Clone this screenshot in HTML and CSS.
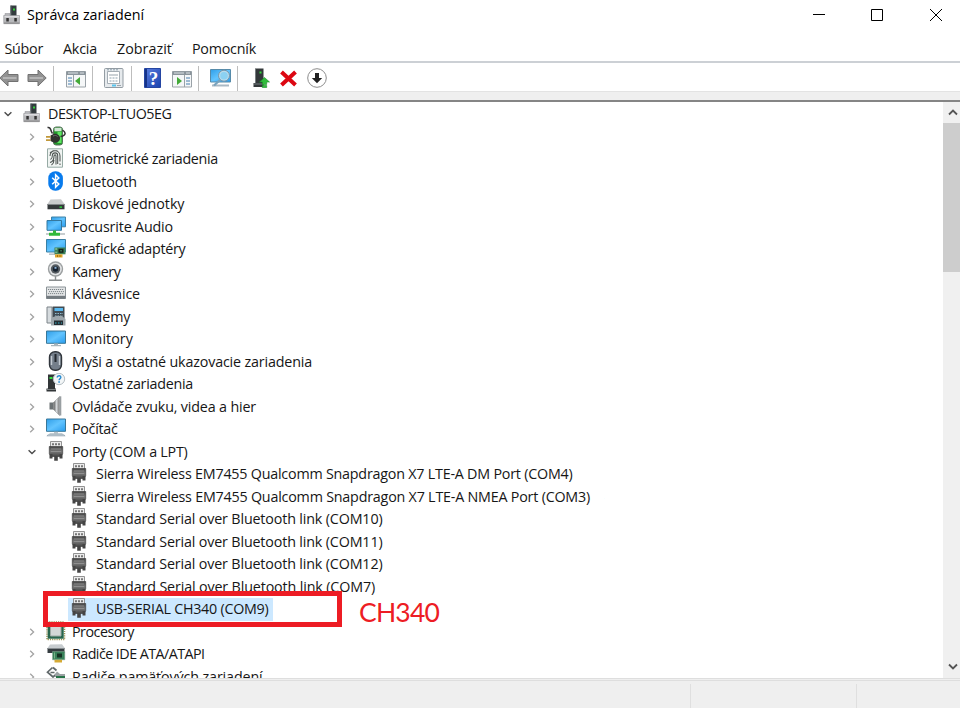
FILE: index.html
```html
<!DOCTYPE html>
<html lang="sk">
<head>
<meta charset="utf-8">
<title>Správca zariadení</title>
<link rel="stylesheet" href="styles.css">
</head>
<body>
<svg class="defs" width="0" height="0" aria-hidden="true">
<defs>
<linearGradient id="blue" x1="0" y1="0" x2="1" y2="1"><stop offset="0" stop-color="#2f9ee8"/><stop offset=".5" stop-color="#62c4ff"/><stop offset="1" stop-color="#299cee"/></linearGradient>
<linearGradient id="metal" x1="0" y1="0" x2="1" y2="0"><stop offset="0" stop-color="#555"/><stop offset=".5" stop-color="#d5d8db"/><stop offset="1" stop-color="#777"/></linearGradient>
<linearGradient id="help" x1="0" y1="0" x2="1" y2="1"><stop offset="0" stop-color="#5c7fe0"/><stop offset="1" stop-color="#1740ad"/></linearGradient>
<linearGradient id="plug" x1="0" y1="0" x2="0" y2="1"><stop offset="0" stop-color="#444"/><stop offset=".5" stop-color="#777"/><stop offset="1" stop-color="#444"/></linearGradient>
<symbol id="root" viewBox="0 0 20 20"><path fill="#333b3e" d="M8.500 .5h6v11h-6z"/><path fill="#555d60" d="M8.500 .5h1v11h-1z"/><path fill="#35d13c" d="M11 3.500h2v2h-2z"/><path fill="#b7b8bb" stroke="#98999d" stroke-width=".6" d="M3 8.500h5v2h9.500v8.200H1.700v-8.200H3z"/><path fill="#dcdcdf" d="M2.500 11h14.500v1.500H2.500z"/><path fill="#333" d="M4.300 13h2.500v3.500H4.300zM12.300 13h2.500v3.500h-2.500z"/><path fill="#888" d="M2 17.500h15.500v1.200H2z"/></symbol>
<symbol id="battery" viewBox="0 0 20 20"><rect x="7.500" y="1" width="9" height="18" rx="2.500" fill="#23982b" stroke="#56705b"/><path fill="#d3e5d5" d="M8.500 1.800h7v3.500h-7z"/><path fill="#5ee562" d="M11.500 6h4v11h-4z"/><path d="M16.500 4c4.500 3 2.500 6-2 6.500M1.500 1.500c4-1 2.500 3 5 6" fill="none" stroke="#333" stroke-width="1.500"/><path fill="#30322f" d="M4.500 9.500 8 7.800c4 0 6 2 6 4.500s-2 4.500-6 4.500L4.500 15z"/><path stroke="#7c807b" d="M7 10c2-.8 3.500-.3 4.500.5"/><path stroke="#c1983a" stroke-width="1.700" d="M0 10.800h4.500M0 14.200h4.500"/></symbol>
<symbol id="finger" viewBox="0 0 20 20"><path fill="#f0f4f2" stroke="#96aaa4" d="M1.500.8h15v18.400h-15z"/><g fill="none" stroke="#4d5451" stroke-width="1.050" transform="translate(-1 0)"><path d="M5 8c0-7 10-7 10 0v5.500M5.500 11.500c2-1 1.800-2.500 1.800-4 .2-3.500 5.400-3.500 5.400 0v8.500M5 14.500c4-1 4-4 4-6.500.2-1.500 2-1.500 2 0v8.500M6.500 17c2-1.500 2.500-3 2.500-5M15 15.500v1.500M7.500 2.800h5M5 5l1.500-1.500"/></g></symbol>
<symbol id="bluetooth" viewBox="0 0 20 20"><rect x="2.300" y=".3" width="14.600" height="19.400" rx="7" fill="#087bed"/><path d="m6.200 6.700 6.600 6.300-3.200 3.200V3.800L12.800 7l-6.600 6.300" fill="none" stroke="#fff" stroke-width="1.500"/></symbol>
<symbol id="disk" viewBox="0 0 20 20"><path fill="#c9cbcc" d="m4.500 6.500 10.500-.2 3.500 4.700h-17z"/><path fill="#34383a" d="M1.500 11h17v5.300h-17z"/><path fill="#818688" d="M1.500 11h17v1h-17z"/><path fill="#27e33b" d="M13.500 13.500H16v1.300h-2.500z"/></symbol>
<symbol id="network" viewBox="0 0 20 20"><path fill="url(#blue)" stroke="#4082a6" d="M5.500 1h14v9.800h-14z"/><path fill="url(#blue)" stroke="#35789e" d="M1 4.500h14.500v9.800H1z"/><path fill="#30b93a" d="M7 14.500h3v2.200h4v3H3v-3h4z"/><path fill="#b7bdc0" d="M0 17.300h3v1.500H0zM14 17.300h5v1.500h-5z"/></symbol>
<symbol id="graphics" viewBox="0 0 20 20"><path fill="url(#blue)" stroke="#3980a5" d="M.5 1.500h19v12.500H.5z"/><path fill="#a7b1b6" d="M3 15.500h6v1.300H3z"/><path fill="#3d8158" d="M8.500 9.500h11v6.800h-11z"/><path fill="#8bc39c" d="M9.200 10.200h2v1.500h-2zM9.200 13.800h2v1h-2z"/><path fill="#14231a" d="M12.500 10.800h5v4h-5z"/><path fill="#397555" d="M14.200 12h1.700v1.500h-1.700z"/><path fill="#e0a62c" d="M9 16.300h7.500v3.200H9z"/><path stroke="#a77412" d="M11.500 17v2M14 17v2"/></symbol>
<symbol id="camera" viewBox="0 0 20 20"><path fill="none" stroke="#898d8e" stroke-width="1.400" d="M9.500 13v6M3 19.200h13"/><circle cx="9.500" cy="8" r="7.700" fill="#9b9fa0"/><circle cx="9.500" cy="8" r="6.300" fill="#e1e3e4"/><circle cx="9.500" cy="8" r="4.700" fill="#555b60"/><circle cx="9.500" cy="8" r="2.700" fill="#16212e"/><path fill="#8db2d6" d="M8.500 5.800h2v2h-2z"/></symbol>
<symbol id="keyboard" viewBox="0 0 20 20"><path fill="#e3e5e6" stroke="#8b9397" d="M.5 4h19v11.500H.5z"/><path fill="#747b80" d="M.5 12.800h19v3H.5z"/><path stroke="#7e868b" stroke-dasharray="1.200 .8" d="M2 6.500h16M3 8.600h15M2 10.600h16"/></symbol>
<symbol id="modem" viewBox="0 0 20 20"><path fill="#d6dbde" stroke="#7c8489" d="M1 1h5v16H1z"/><path fill="#424c53" d="M6.500 .5h12v12h-12z"/><path fill="#5ab9ef" d="M8.500 2h8.500v3H8.500z"/><path stroke="#93bed0" stroke-dasharray="1.500 1" d="M9 7.500h8M9 10h8"/><path fill="#9ea7ac" d="m6 11.500 4-1.500h6l3.500 3v6.500H5v-6z"/><path fill="#252d32" d="M8 14.500h9V19H8z"/><path stroke="#34b0c5" stroke-dasharray="1.500 1.500" d="M9 17h7"/></symbol>
<symbol id="monitor" viewBox="0 0 20 20"><path fill="url(#blue)" stroke="#397798" d="M.5 3h19v12.300H.5z"/><path fill="#aab6bd" d="M8 15.500h4v1.500h3v1.300H5V17h3z"/></symbol>
<symbol id="mouse" viewBox="0 0 20 20"><rect x="3.500" y=".7" width="12" height="18.600" rx="5.500" fill="#747e8a" stroke="#30353b" stroke-width="1.400"/><path stroke="#c3cad1" stroke-width="1.400" d="M5.500 5v9M13.500 5v9"/><path stroke="#22272d" stroke-width="2" d="M9.500 3v8"/></symbol>
<symbol id="unknown" viewBox="0 0 20 20"><path fill="#323638" d="M2 1.500h7v14H2zM.5 15.500h9.500v3H.5z"/><path fill="#31df3f" d="M3.500 4h3v2h-3z"/><path stroke="#797e80" d="M.5 16.500H10"/><circle cx="13" cy="6" r="5.700" fill="#f3f6f7" stroke="#b5bec3"/><path d="M11.200 4.500c.3-2.700 4.200-2 3.500.2-.4 1-1.500 1.200-1.600 2.500" fill="none" stroke="#2589d0" stroke-width="1.500"/><path fill="#2589d0" d="M12.300 8.300h1.600v1.500h-1.600z"/></symbol>
<symbol id="sound" viewBox="0 0 20 20"><path fill="#6c7275" d="M3.500 6.500h4v7h-4z"/><path fill="url(#metal)" stroke="#8c9193" stroke-width=".5" d="m7.500 6.500 6-6v19l-6-6z"/><path fill="#999fa2" d="M13.500.3h1.800v19.200h-1.800z"/></symbol>
<symbol id="computer" viewBox="0 0 20 20"><path fill="url(#blue)" stroke="#397798" d="M.5 1h19v12.300H.5z"/><path fill="#bbc4ca" d="M8 13.800h4v1.700H8z"/><path fill="#8a9daa" d="m2 16.500 2-1h12l2 1 1.500 1.800H.5z"/><path stroke="#d4dde3" d="M2 17h16"/></symbol>
<symbol id="port" viewBox="0 0 20 20"><path fill="#ebebeb" stroke="#888" stroke-width=".9" d="M4.500.5h11v6h-11z"/><path fill="#777" d="M6 2.300h2v2H6zM9 2.300h2v2H9zM12 2.300h2v2h-2z"/><path fill="url(#plug)" stroke="#414141" stroke-width=".7" d="M3.300 5.500h13.400v7l-1.700 3H5l-1.700-3z"/><path stroke="#959595" stroke-width=".8" d="M5 8h10M5 10.500h10"/><path fill="#444" d="M3.500 13h3v4.500h-3zM13.500 13h3v4.500h-3zM8.200 15h3.600v4.800H8.200z"/></symbol>
<symbol id="cpu" viewBox="0 0 20 20"><path fill="none" stroke="#9c9354" stroke-width="1.500" stroke-dasharray="1.200 1" d="M1 1h17.500v17.500H1z"/><path fill="#28664d" d="M1.700 1.700h16v16h-16z"/><path fill="#d3d7d6" stroke="#9ea9a4" d="M4.500 3.500H15V15H4.500z"/></symbol>
<symbol id="ide" viewBox="0 0 20 20"><path fill="#c7cccf" d="m4 1.500 12-.2 3 4H1.500z"/><path fill="#353c40" d="M1.500 5h17v5h-17z"/><path fill="#878d90" d="M1.500 5h17v1h-17z"/><path fill="#39825a" stroke="#8aa895" stroke-width=".5" d="M6.500 8.500h12.300v8.300H6.500z"/><path fill="#153223" d="M11 10.500h5v4h-5z"/><path stroke="#7ab188" d="M8.500 9.500v6"/><path fill="#d5aa35" d="M8.500 16.800H16v2.700H8.500z"/></symbol>
<symbol id="storage" viewBox="0 0 20 20"><path d="m7 1.500 3.500 3M6.500 1.500 1.500 6.200 7 11l3-2.500M4.500 6.500h4" fill="none" stroke="#60686a" stroke-width="1.700"/><path fill="#9ba1a3" d="m9 8 2-2.500 3 2.500h5v3H9z"/><path fill="#287348" d="M10 10h9v8h-9z"/></symbol>
<symbol id="chev" viewBox="0 0 10 10"><path d="m3.200 1.700 3.400 3.300-3.400 3.300" fill="none" stroke="#a3a3a3" stroke-width="1.300"/></symbol>
<symbol id="chevdown" viewBox="0 0 10 10"><path d="m1.600 3.200 3.400 3.400 3.400-3.400" fill="none" stroke="#4c4c4c" stroke-width="1.400"/></symbol>
<symbol id="arrow" viewBox="0 0 20 20"><path d="M.8 10 9 2v4.500h10v7H9V18z" fill="#929292" stroke="#717171"/><path d="M4 10h13.500" stroke="#b5b5b5" stroke-width="2"/></symbol>
<symbol id="pane" viewBox="0 0 20 20"><path fill="#f5f7f8" stroke="#9aa2a8" d="M.5 3.500h19v15.500H.5z"/><path fill="#8a949b" d="M.5 3.500h19v3.500H.5z"/><path stroke="#dbe1e5" d="M2 5h10M14 5h4"/></symbol>
</defs>
</svg>
<div class="window">
<header class="titlebar"><svg class="app"><use href="#root"/></svg><h1><span data-width="117">Správca zariadení</span></h1>
<div class="controls"><svg viewBox="0 0 12 12"><path d="M0 5.500h12"/></svg><svg viewBox="0 0 12 12"><path d="M.5.500h11v11H.5z"/></svg><svg viewBox="0 0 12 12"><path d="m0 0 12 12M12 0 0 12"/></svg></div></header>
<nav class="menu"><span data-width="38.500">Súbor</span><span data-width="34">Akcia</span><span data-width="55">Zobraziť</span><span data-width="64">Pomocník</span></nav>
<div class="toolbar">
<svg class="back"><use href="#arrow"/></svg>
<svg class="forward" viewBox="0 0 20 20"><path d="M19.200 10 11 2v4.500H1v7h10V18z" fill="#929292" stroke="#717171"/><path d="M2.500 10H16" stroke="#b5b5b5" stroke-width="2"/></svg>
<i></i>
<svg class="tree-toggle" viewBox="0 0 20 20"><use href="#pane"/><path d="M7.500 7v12" stroke="#9aa2a8"/><path d="M2 10h4M2 13h4M2 16h4" stroke="#477eaf"/><path fill="#43aa38" d="m14 9-5 4 5 4z"/></svg>
<i></i>
<svg class="properties" viewBox="0 0 20 20"><rect x=".5" y=".5" width="18.500" height="19" rx="1" fill="#e6eaed" stroke="#939ca3"/><path fill="#fff" stroke="#a4adb4" d="M3.500 3.500h12v12h-12z"/><path fill="#cbd1d5" d="M5 6h9v2H5z"/><path stroke="#8da0ad" stroke-dasharray="2 1" d="M5.500 10h8M5.500 13h8M3 1.800h12"/><path fill="#58c5ed" d="M8 16.500h4v2H8z"/><path stroke="#9ca5ac" d="M13 17.500h4"/></svg>
<i></i>
<svg class="help" viewBox="0 0 17 20"><path fill="url(#help)" stroke="#2445a2" d="M.5.500h16v19H.5z"/><path fill="#163489" d="M1 1h2v18H1z"/><text x="9.500" y="16.500">?</text></svg>
<svg class="action" viewBox="0 0 20 20"><use href="#pane"/><path d="M12.500 7v12" stroke="#9aa2a8"/><path d="M14 10h4M14 13h4M14 16h4" stroke="#477eaf"/><path fill="#43aa38" d="m5 9 5 4-5 4z"/></svg>
<i></i>
<svg class="scan" viewBox="0 0 21 20"><path fill="url(#blue)" stroke="#568baa" d="M.5 1.500h20v12.500H.5z"/><path fill="#aab9c4" d="M2 16.500h17v2H2z"/><circle cx="14" cy="7.700" r="5.500" fill="#b8dbec" stroke="#7696aa"/><circle cx="14" cy="7.700" r="3.800" fill="#8bd1f2"/><path d="m10 12-6 5.500" stroke="#79a3bd" stroke-width="2.300"/></svg>
<i></i>
<svg class="update" viewBox="0 0 17 20"><path fill="#33383a" d="M2 .5h8.500v15H2zM.5 15h10v4H.5z"/><path stroke="#777d80" d="M2.500 1v14M1 16h10"/><path fill="#35d83d" d="M6.500 3.500h2v2h-2z"/><path fill="#30bd3b" stroke="#198d27" stroke-width=".6" d="m11.500 9.500-5 4.500h2.800v2.500h4.400V14h2.800zM9.300 17.500h4.400v2H9.300z"/></svg>
<svg class="delete" viewBox="0 0 17 17"><path d="m1.500 2 14 13M15.500 2l-14 13" fill="none" stroke="#dc0712" stroke-width="4"/></svg>
<svg class="install" viewBox="0 0 20 20"><circle cx="10" cy="10" r="9.300" fill="#fff" stroke="#8c8c8c"/><path fill="#202020" d="M8 5h4v5h3.200L10 15.300 4.800 10H8z"/></svg>
</div>
<div class="band"></div>
<main class="content">
<div class="tree">
<div class="row root"><svg class="chevron"><use href="#chevdown"/></svg><svg class="icon"><use href="#root"/></svg><span class="label"><b data-width="123.500">DESKTOP-LTUO5EG</b></span></div>
<div class="row"><svg class="chevron"><use href="#chev"/></svg><svg class="icon"><use href="#battery"/></svg><span class="label"><b data-width="45">Batérie</b></span></div>
<div class="row"><svg class="chevron"><use href="#chev"/></svg><svg class="icon"><use href="#finger"/></svg><span class="label"><b data-width="146">Biometrické zariadenia</b></span></div>
<div class="row"><svg class="chevron"><use href="#chev"/></svg><svg class="icon"><use href="#bluetooth"/></svg><span class="label"><b data-width="65">Bluetooth</b></span></div>
<div class="row"><svg class="chevron"><use href="#chev"/></svg><svg class="icon"><use href="#disk"/></svg><span class="label"><b data-width="112.500">Diskové jednotky</b></span></div>
<div class="row"><svg class="chevron"><use href="#chev"/></svg><svg class="icon"><use href="#network"/></svg><span class="label"><b data-width="101">Focusrite Audio</b></span></div>
<div class="row"><svg class="chevron"><use href="#chev"/></svg><svg class="icon"><use href="#graphics"/></svg><span class="label"><b data-width="113.500">Grafické adaptéry</b></span></div>
<div class="row"><svg class="chevron"><use href="#chev"/></svg><svg class="icon"><use href="#camera"/></svg><span class="label"><b data-width="48.500">Kamery</b></span></div>
<div class="row"><svg class="chevron"><use href="#chev"/></svg><svg class="icon"><use href="#keyboard"/></svg><span class="label"><b data-width="68">Klávesnice</b></span></div>
<div class="row"><svg class="chevron"><use href="#chev"/></svg><svg class="icon"><use href="#modem"/></svg><span class="label"><b data-width="58.500">Modemy</b></span></div>
<div class="row"><svg class="chevron"><use href="#chev"/></svg><svg class="icon"><use href="#monitor"/></svg><span class="label"><b data-width="61">Monitory</b></span></div>
<div class="row"><svg class="chevron"><use href="#chev"/></svg><svg class="icon"><use href="#mouse"/></svg><span class="label"><b data-width="240">Myši a ostatné ukazovacie zariadenia</b></span></div>
<div class="row"><svg class="chevron"><use href="#chev"/></svg><svg class="icon"><use href="#unknown"/></svg><span class="label"><b data-width="121">Ostatné zariadenia</b></span></div>
<div class="row"><svg class="chevron"><use href="#chev"/></svg><svg class="icon"><use href="#sound"/></svg><span class="label"><b data-width="184">Ovládače zvuku, videa a hier</b></span></div>
<div class="row"><svg class="chevron"><use href="#chev"/></svg><svg class="icon"><use href="#computer"/></svg><span class="label"><b data-width="45.500">Počítač</b></span></div>
<div class="row"><svg class="chevron"><use href="#chevdown"/></svg><svg class="icon"><use href="#port"/></svg><span class="label"><b data-width="115.500">Porty (COM a LPT)</b></span></div>
<div class="row child"><svg class="icon"><use href="#port"/></svg><span class="label"><b data-width="476.500">Sierra Wireless EM7455 Qualcomm Snapdragon X7 LTE-A DM Port (COM4)</b></span></div>
<div class="row child"><svg class="icon"><use href="#port"/></svg><span class="label"><b data-width="494">Sierra Wireless EM7455 Qualcomm Snapdragon X7 LTE-A NMEA Port (COM3)</b></span></div>
<div class="row child"><svg class="icon"><use href="#port"/></svg><span class="label"><b data-width="286.500">Standard Serial over Bluetooth link (COM10)</b></span></div>
<div class="row child"><svg class="icon"><use href="#port"/></svg><span class="label"><b data-width="286.500">Standard Serial over Bluetooth link (COM11)</b></span></div>
<div class="row child"><svg class="icon"><use href="#port"/></svg><span class="label"><b data-width="286.500">Standard Serial over Bluetooth link (COM12)</b></span></div>
<div class="row child"><svg class="icon"><use href="#port"/></svg><span class="label"><b data-width="279">Standard Serial over Bluetooth link (COM7)</b></span></div>
<div class="row child selected"><svg class="icon"><use href="#port"/></svg><span class="label"><b data-width="172.500">USB-SERIAL CH340 (COM9)</b></span></div>
<div class="row"><svg class="chevron"><use href="#chev"/></svg><svg class="icon"><use href="#cpu"/></svg><span class="label"><b data-width="62">Procesory</b></span></div>
<div class="row"><svg class="chevron"><use href="#chev"/></svg><svg class="icon"><use href="#ide"/></svg><span class="label"><b data-width="132.500">Radiče IDE ATA/ATAPI</b></span></div>
<div class="row"><svg class="chevron"><use href="#chev"/></svg><svg class="icon"><use href="#storage"/></svg><span class="label"><b data-width="190.500">Radiče pamäťových zariadení</b></span></div>
</div>
<div class="scrollbar"><svg viewBox="0 0 10 10"><path d="m1 6.500 4-4 4 4"/></svg><div class="thumb"></div><svg viewBox="0 0 10 10"><path d="m1 3.500 4 4 4-4"/></svg></div>
</main>
<footer class="status"><div></div><div></div><div></div></footer>
<div class="highlight"></div><div class="note"><span data-width="80">CH340</span></div>
</div>
<script src="labels.js"></script>
</body>
</html>
```
FILE: styles.css
```css
* { box-sizing: border-box; }
body { margin: 0; background: #fff; color: #161616; font: 14.3px/20px "Open Sans", "Noto Sans", sans-serif; }
.defs { position: absolute; }
.window { position: relative; width: 960px; height: 708px; overflow: hidden; display: flex; flex-direction: column; }
svg { display: block; flex: none; }
.titlebar { height: 30px; flex: none; display: flex; align-items: center; padding-left: 2px; }
.app { width: 20px; height: 20px; margin-top: -1px; }
h1 { margin: 0 0 0 5px; font-size: 14.3px; font-weight: 400; color: #000; white-space: nowrap; }
.controls { margin-left: auto; display: flex; gap: 47px; padding-right: 18px; }
.controls svg { width: 12px; height: 12px; fill: none; stroke: #000; }
.controls svg:nth-child(1) { margin-right: -1px; }
.menu { height: 33px; flex: none; border-bottom: 2px solid #ccd0d5; display: flex; gap: 20px; padding: 9px 0 0 4.5px; white-space: nowrap; }
.toolbar { height: 28px; flex: none; display: flex; align-items: center; padding-top: 2px; }
.toolbar svg { width: 20px; height: 20px; }
.toolbar i { width: 1px; height: 25px; flex: none; background: #bdbdbd; }
.toolbar .back { margin-left: -1px; }
.toolbar .forward { margin: 0 6px 0 8px; }
.toolbar .tree-toggle { margin: 0 6px 0 12px; }
.toolbar .properties { margin: 0 7px 0 11px; }
.toolbar .help { width: 17px; margin: 0 11px 0 12px; }
.help text { font: bold 19px "Liberation Serif", serif; fill: #fff; text-anchor: middle; }
.toolbar .action { margin-right: 6px; }
.toolbar .scan { width: 21px; margin: 0 6px 0 11px; }
.toolbar .update { width: 17px; margin: 0 10px 0 15px; }
.toolbar .delete { width: 17px; height: 17px; margin-right: 10px; }
.band { height: 11px; flex: none; background: #efefef; border-top: 1px solid #e3e3e3; border-bottom: 2px solid #858585; }
.content { height: 576px; flex: none; display: flex; overflow: hidden; }
.tree { flex: 1; overflow: hidden; padding-top: 1.2px; }
.row { height: 22.5px; display: flex; align-items: center; padding-left: 27px; white-space: nowrap; }
.row.root { padding-left: 3px; }
.chevron { width: 10px; height: 10px; margin-right: 9px; }
.icon { width: 20px; height: 20px; margin-top: -2px; }
.label { height: 22.5px; line-height: 22px; padding: 0 4px 0 6px; }
.label b { font-weight: 400; }
.child { padding-left: 69px; }
.child .label { padding-left: 7px; }
.selected { background: linear-gradient(#cce8ff, #cce8ff) 68px 0 / 205px 100% no-repeat; }
.scrollbar { width: 17px; background: #f0f0f0; display: flex; flex-direction: column; align-items: center; }
.scrollbar svg { width: 10px; height: 10px; margin: 6px 0 5px 2px; fill: none; stroke: #555; stroke-width: 1.8; }
.scrollbar svg:last-child { margin: auto 0 7px 2px; }
.thumb { width: 17px; height: 149px; background: #cdcdcd; }
.status { flex: 1; display: flex; background: #efefef; border-top: 3px double #dedede; padding-top: 3px; }
.status div { width: 690px; }
.status div + div { width: 166px; border-left: 1px solid #dfdfdf; }
.status div + div + div { flex: 1; }
.highlight { position: absolute; left: 43px; top: 591px; width: 299px; height: 36px; border: 5px solid #ed1c24; }
.note { position: absolute; left: 359px; top: 594px; color: #ed1c24; font: 26.500px/36px Lato, sans-serif; white-space: nowrap; }
```
FILE: labels.js
```js
document.querySelectorAll('[data-width]').forEach(function (el) {
  var range = document.createRange();
  range.selectNodeContents(el);
  var natural = range.getBoundingClientRect().width;
  var gap = (Number(el.dataset.width) - natural) / el.textContent.length;
  el.style.letterSpacing = gap.toFixed(3) + 'px';
});
```
